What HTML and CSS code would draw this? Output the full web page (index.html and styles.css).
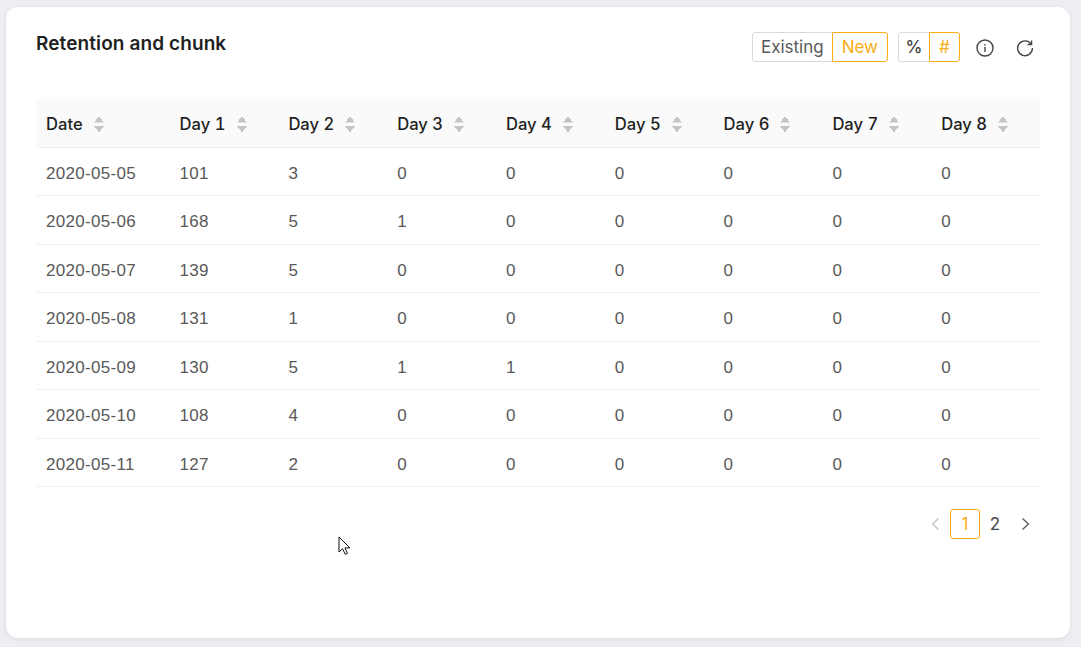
FILE: index.html
```html
<!DOCTYPE html>
<html lang="en">
<head>
<meta charset="utf-8">
<title>Retention and chunk</title>
<link rel="stylesheet" href="styles.css">
</head>
<body>
<main class="card">
  <header class="card-head">
    <h1 class="title">Retention and chunk</h1>
    <div class="tools">
      <div class="group group-wide">
        <button class="seg seg-text">Existing</button>
        <button class="seg seg-on">New</button>
      </div>
      <div class="group group-narrow">
        <button class="seg seg-bold">%</button>
        <button class="seg seg-on">#</button>
      </div>
      <svg class="tool-icon info" viewBox="0 0 18 18" width="18" height="18" fill="none" stroke="#444" stroke-width="1.4"><circle cx="9" cy="9" r="8"/><path d="M9 8v5M9 5v1.4"/></svg>
      <svg class="tool-icon" viewBox="0 0 18 18" width="18" height="18" fill="none" stroke="#444" stroke-width="1.4"><path d="M15.2 5.2A7.4 7.4 0 1 0 16.4 9"/><path d="M15.6 1.6v3.9h-3.9" stroke-width="1.3"/></svg>
    </div>
  </header>
  <table class="data">
    <colgroup><col class="col-first"><col class="col-day"><col class="col-day"><col class="col-day"><col class="col-day"><col class="col-day"><col class="col-day"><col class="col-day"><col class="col-day"></colgroup>
    <thead>
      <tr>
        <th><span class="th-in">Date<i class="sort"></i></span></th>
        <th><span class="th-in">Day 1<i class="sort"></i></span></th>
        <th><span class="th-in">Day 2<i class="sort"></i></span></th>
        <th><span class="th-in">Day 3<i class="sort"></i></span></th>
        <th><span class="th-in">Day 4<i class="sort"></i></span></th>
        <th><span class="th-in">Day 5<i class="sort"></i></span></th>
        <th><span class="th-in">Day 6<i class="sort"></i></span></th>
        <th><span class="th-in">Day 7<i class="sort"></i></span></th>
        <th><span class="th-in">Day 8<i class="sort"></i></span></th>
      </tr>
    </thead>
    <tbody>
      <tr><td>2020-05-05</td><td>101</td><td>3</td><td>0</td><td>0</td><td>0</td><td>0</td><td>0</td><td>0</td></tr>
      <tr><td>2020-05-06</td><td>168</td><td>5</td><td>1</td><td>0</td><td>0</td><td>0</td><td>0</td><td>0</td></tr>
      <tr><td>2020-05-07</td><td>139</td><td>5</td><td>0</td><td>0</td><td>0</td><td>0</td><td>0</td><td>0</td></tr>
      <tr><td>2020-05-08</td><td>131</td><td>1</td><td>0</td><td>0</td><td>0</td><td>0</td><td>0</td><td>0</td></tr>
      <tr><td>2020-05-09</td><td>130</td><td>5</td><td>1</td><td>1</td><td>0</td><td>0</td><td>0</td><td>0</td></tr>
      <tr><td>2020-05-10</td><td>108</td><td>4</td><td>0</td><td>0</td><td>0</td><td>0</td><td>0</td><td>0</td></tr>
      <tr><td>2020-05-11</td><td>127</td><td>2</td><td>0</td><td>0</td><td>0</td><td>0</td><td>0</td><td>0</td></tr>
    </tbody>
  </table>
  <nav class="pager">
    <svg class="arrow" viewBox="0 0 30 30" width="30" height="30" fill="none" stroke="#c4c4c4" stroke-width="1.3"><path d="M18.5 9.5 L12.5 15 L18.5 20.5"/></svg>
    <span class="page page-on">1</span>
    <span class="page">2</span>
    <svg class="arrow" viewBox="0 0 30 30" width="30" height="30" fill="none" stroke="#595959" stroke-width="1.3"><path d="M12.5 9.5 L18.5 15 L12.5 20.5"/></svg>
  </nav>
</main>
<svg class="cursor" viewBox="0 0 13 20" width="13" height="20"><path d="M1 1v15l3.6-3.3 2.6 5.6 2.3-1-2.6-5.4h5z" fill="#fff" stroke="#111" stroke-width="1"/></svg>
</body>
</html>
```
FILE: styles.css
```css
* { box-sizing: border-box; }
html, body { height: 100%; }
body {
  margin: 0;
  padding: 7px 11px 9px 6px;
  background: #eceef3;
  font-family: Inter, "Liberation Sans", sans-serif;
  font-size: 16px;
  color: #595959;
  overflow: hidden;
  position: relative;
}
.card {
  height: 631px;
  background: #fff;
  border-radius: 12px;
  padding: 24px 30px 0;
  box-shadow: 0 1px 4px rgba(0, 0, 0, .08);
}
.card-head {
  display: flex;
  justify-content: space-between;
  align-items: flex-start;
  height: 68px;
}
.title {
  margin: 0;
  font-size: 19px;
  line-height: 25px;
  font-weight: 600;
  letter-spacing: .1px;
  color: #1f1f1f;
}
.tools {
  display: flex;
  align-items: center;
  margin: 1px 0 0;
  padding-right: 6px;
}
.group { display: flex; height: 30px; }
.group-wide { margin-right: 10px; }
.group-narrow { margin-right: 16px; }
.seg {
  font: inherit;
  font-size: 17px;
  color: #595959;
  background: #fff;
  border: 1px solid #d9d9d9;
  padding: 0 9px;
  height: 30px;
  line-height: 28px;
  margin-left: -1px;
}
.seg:first-child { border-radius: 3px 0 0 3px; margin-left: 0; }
.seg:last-child { border-radius: 0 3px 3px 0; }
.seg-text { padding: 0 8px; }
.seg-on { color: #faad14; border-color: #faad14; position: relative; }
.seg-bold { color: #434343; font-weight: 500; width: 32px; padding: 0; }
.group-narrow .seg-on { width: 31px; padding: 0; }
.tool-icon { display: block; margin-top: 1px; }
.info { margin-right: 22px; }
.data {
  width: 1004px;
  table-layout: fixed;
  border-collapse: separate;
  border-spacing: 0;
}
.col-first { width: 133.6px; }
.col-day { width: 108.8px; }
th, td {
  padding: 0 10px;
  text-align: left;
  border-bottom: 1px solid #f0f0f0;
  line-height: 24px;
}
th {
  height: 48.5px;
  padding-top: 3px;
  background: #fafafa;
  color: #1f1f1f;
  font-size: 16.6px;
  font-weight: 500;
  font-variant-numeric: tabular-nums;
}
td {
  height: 48.5px;
  padding-top: 5px;
  font-family: "Liberation Sans", Inter, sans-serif;
  font-size: 17px;
  letter-spacing: .3px;
}
.th-in { display: flex; align-items: center; gap: 11px; }
.sort {
  display: block;
  width: 10px;
  height: 16px;
  background:
    linear-gradient(to bottom right, transparent 50%, #c4c4c4 51%) 0 0 / 5px 6.5px no-repeat,
    linear-gradient(to bottom left, transparent 50%, #c4c4c4 51%) 5px 0 / 5px 6.5px no-repeat,
    linear-gradient(to top right, transparent 50%, #c4c4c4 51%) 0 9.5px / 5px 6.5px no-repeat,
    linear-gradient(to top left, transparent 50%, #c4c4c4 51%) 5px 9.5px / 5px 6.5px no-repeat;
}
.pager {
  display: flex;
  justify-content: flex-end;
  align-items: center;
  margin-top: 22px;
}
.arrow { display: block; }
.page {
  width: 30px;
  height: 30px;
  line-height: 28px;
  text-align: center;
  border: 1px solid transparent;
  border-radius: 3px;
  color: #434343;
  font-size: 17px;
}
.page-on { color: #faad14; border-color: #faad14; }
.cursor { position: absolute; left: 338px; top: 536px; }
```
